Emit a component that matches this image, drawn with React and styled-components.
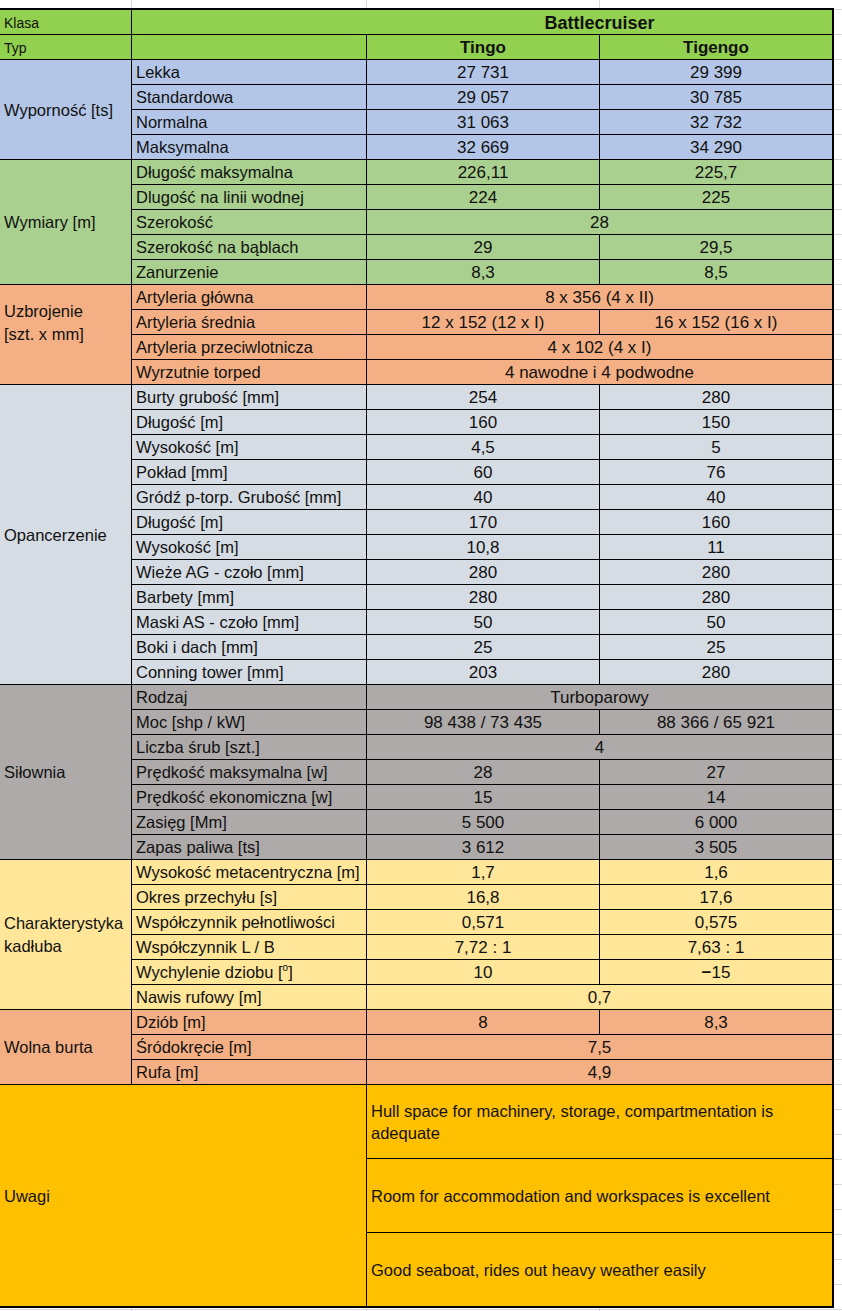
import React from 'react'
import styled, { createGlobalStyle } from 'styled-components'

const GlobalStyle = createGlobalStyle`
    html, body {
        margin: 0;
        padding: 0;
    }
    body {
        width: 842px;
        height: 1311px;
        overflow: hidden;
        background-color: #fff;
        background-image:
            linear-gradient(to right, transparent 131px, #dadada 131px, #dadada 132px, transparent 132px),
            linear-gradient(to right, transparent 366px, #dadada 366px, #dadada 367px, transparent 367px),
            linear-gradient(to right, transparent 599px, #dadada 599px, #dadada 600px, transparent 600px),
            repeating-linear-gradient(to bottom, #dadada 0, #dadada 1px, transparent 1px, transparent 25px);
        background-position: 0 0, 0 0, 0 0, 0 9px;
        font-family: "Liberation Sans", Arial, sans-serif;
        color: #111;
    }
`;

const COLUMNS = '131px 234px 232px 232px';

// superscript degree mark in "[o]"
const Sup = styled.sup`
    font-size: 10px;
    line-height: 0;
    vertical-align: 7px;
`;

const sections = [
    {
        label: 'Wyporność [ts]', bg: '#b4c6e7',
        rows: [
            ['Lekka', '27 731', '29 399'],
            ['Standardowa', '29 057', '30 785'],
            ['Normalna', '31 063', '32 732'],
            ['Maksymalna', '32 669', '34 290'],
        ],
    },
    {
        label: 'Wymiary [m]', bg: '#a9d08e',
        rows: [
            ['Długość maksymalna', '226,11', '225,7'],
            ['Dlugość na linii wodnej', '224', '225'],
            ['Szerokość', '28'],
            ['Szerokość na bąblach', '29', '29,5'],
            ['Zanurzenie', '8,3', '8,5'],
        ],
    },
    {
        label: <>Uzbrojenie<br />[szt. x mm]</>, bg: '#f4b084', lift: true,
        rows: [
            ['Artyleria główna', '8 x 356 (4 x II)'],
            ['Artyleria średnia', '12 x 152 (12 x I)', '16 x 152 (16 x I)'],
            ['Artyleria przeciwlotnicza', '4 x 102 (4 x I)'],
            ['Wyrzutnie torped', '4 nawodne i 4 podwodne'],
        ],
    },
    {
        label: 'Opancerzenie', bg: '#d6dce4',
        rows: [
            ['Burty grubość [mm]', '254', '280'],
            ['Długość [m]', '160', '150'],
            ['Wysokość [m]', '4,5', '5'],
            ['Pokład [mm]', '60', '76'],
            ['Gródź p-torp. Grubość [mm]', '40', '40'],
            ['Długość [m]', '170', '160'],
            ['Wysokość [m]', '10,8', '11'],
            ['Wieże AG - czoło [mm]', '280', '280'],
            ['Barbety [mm]', '280', '280'],
            ['Maski AS - czoło [mm]', '50', '50'],
            ['Boki i dach [mm]', '25', '25'],
            ['Conning tower [mm]', '203', '280'],
        ],
    },
    {
        label: 'Siłownia', bg: '#aeaaaa',
        rows: [
            ['Rodzaj', 'Turboparowy'],
            ['Moc [shp / kW]', '98 438 / 73 435', '88 366 / 65 921'],
            ['Liczba śrub [szt.]', '4'],
            ['Prędkość maksymalna [w]', '28', '27'],
            ['Prędkość ekonomiczna [w]', '15', '14'],
            ['Zasięg [Mm]', '5 500', '6 000'],
            ['Zapas paliwa [ts]', '3 612', '3 505'],
        ],
    },
    {
        label: <>Charakterystyka<br />kadłuba</>, bg: '#ffe699',
        rows: [
            ['Wysokość metacentryczna [m]', '1,7', '1,6'],
            ['Okres przechyłu [s]', '16,8', '17,6'],
            ['Współczynnik pełnotliwości', '0,571', '0,575'],
            ['Współczynnik L / B', '7,72 : 1', '7,63 : 1'],
            [<>Wychylenie dziobu [<Sup>o</Sup>]</>, '10', <><b>−</b>15</>],
            ['Nawis rufowy [m]', '0,7'],
        ],
    },
    {
        label: 'Wolna burta', bg: '#f4b084',
        rows: [
            ['Dziób [m]', '8', '8,3'],
            ['Śródokręcie [m]', '7,5'],
            ['Rufa [m]', '4,9'],
        ],
    },
];

const notes = [
    <>Hull space for machinery, storage, compartmentation is<br />adequate</>,
    'Room for accommodation and workspaces is excellent',
    'Good seaboat, rides out heavy weather easily',
];

function App() {
    return (
        <>
            <GlobalStyle />
            <Sheet>
                <Section $bg="#92d050">
                    <Cell $small>Klasa</Cell>
                    <Cell $colSpan={3} $center $bold $size={18} $offset={235}>Battlecruiser</Cell>
                    <Cell $small>Typ</Cell>
                    <Cell />
                    <Cell $center $bold $size={17}>Tingo</Cell>
                    <Cell $center $bold $size={17}>Tigengo</Cell>
                </Section>

                {sections.map((section, i) => (
                    <Section key={i} $bg={section.bg}>
                        <GroupLabel $rowSpan={section.rows.length} $lift={section.lift}>
                            <span>{section.label}</span>
                        </GroupLabel>
                        {section.rows.map((row, j) => (
                            <React.Fragment key={j}>
                                <Cell><span>{row[0]}</span></Cell>
                                {row.length === 2 ? (
                                    <Cell $center $value $colSpan={2}><span>{row[1]}</span></Cell>
                                ) : (
                                    <>
                                        <Cell $center $value><span>{row[1]}</span></Cell>
                                        <Cell $center $value><span>{row[2]}</span></Cell>
                                    </>
                                )}
                            </React.Fragment>
                        ))}
                    </Section>
                ))}

                <Section $bg="#ffc000" $rowHeight={73}>
                    <GroupLabel $rowSpan={3} $colSpan={2}>Uwagi</GroupLabel>
                    {notes.map((note, i) => (
                        <Cell key={i} $colSpan={2} $note><span>{note}</span></Cell>
                    ))}
                </Section>
            </Sheet>
        </>
    )
}

const Sheet = styled.div`
    margin-top: 8px;
    width: 832px;
    display: flex;
    flex-direction: column;
    gap: 1px;
    background: #000;
    border-top: 2px solid #000;
    border-right: 2px solid #000;
    border-bottom: 2px solid #000;
`;

const Section = styled.div`
    display: grid;
    grid-template-columns: ${COLUMNS};
    grid-auto-rows: ${p => p.$rowHeight || 24}px;
    gap: 1px;
    background: #000;

    & > * {
        background: ${p => p.$bg};
    }
`;

const fontSize = p => {
    if (p.$small) return 14
    if (p.$size) return p.$size
    if (p.$value) return 17
    return 16.5
}

const Cell = styled.div`
    display: flex;
    align-items: center;
    justify-content: ${p => p.$center ? 'center' : 'flex-start'};
    grid-column: ${p => p.$colSpan ? `span ${p.$colSpan}` : 'auto'};
    padding: 1px 4px 0 ${p => (p.$offset || 0) + 4}px;
    font-size: ${fontSize}px;
    font-weight: ${p => p.$bold ? 700 : 400};
    line-height: ${p => p.$note ? '22px' : '1'};
    white-space: nowrap;
    overflow: hidden;

    b {
        font-weight: 700;
    }
`;

const GroupLabel = styled.div`
    grid-column: 1 / span ${p => p.$colSpan || 1};
    grid-row: 1 / span ${p => p.$rowSpan};
    display: flex;
    align-items: center;
    padding: 1px 4px ${p => p.$lift ? 24 : 0}px;
    font-size: 16.5px;
    line-height: 23px;
`;

export default App
